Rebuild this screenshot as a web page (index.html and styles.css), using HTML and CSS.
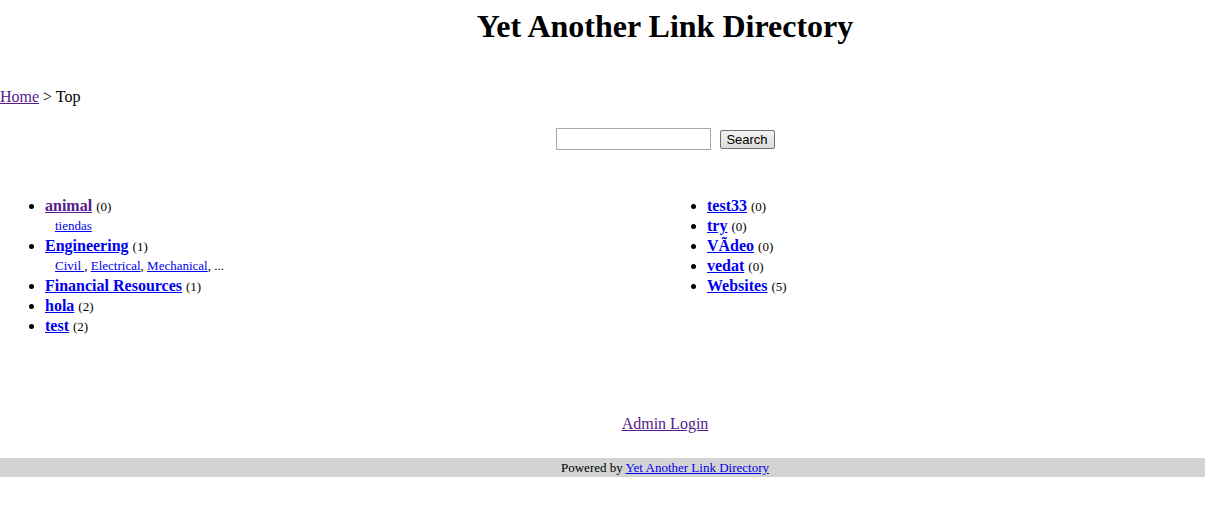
FILE: index.html
```html
<!DOCTYPE html>
<html lang="en">
<head>
    <meta charset="UTF-8">
    <title>Yet Another Link Directory</title>
    <link rel="stylesheet" href="styles.css">
</head>
<body>
    <h1 class="site-title centered">Yet Another Link Directory</h1>

    <div class="breadcrumb">
        <a href="#" class="visited">Home</a> &gt; Top
    </div>

    <form class="search centered">
        <input type="text" class="search-input" name="q">
        <button type="submit" class="search-btn">Search</button>
    </form>

    <div class="categories">
        <ul class="cat-list">
            <li>
                <a href="#" class="cat visited">animal</a> <span class="count">(0)</span>
                <div class="subcats"><a href="#">tiendas</a></div>
            </li>
            <li>
                <a href="#" class="cat">Engineering</a> <span class="count">(1)</span>
                <div class="subcats"><a href="#">Civil </a>, <a href="#">Electrical</a>, <a href="#">Mechanical</a>, ...</div>
            </li>
            <li><a href="#" class="cat">Financial Resources</a> <span class="count">(1)</span></li>
            <li><a href="#" class="cat">hola</a> <span class="count">(2)</span></li>
            <li><a href="#" class="cat">test</a> <span class="count">(2)</span></li>
        </ul>
        <ul class="cat-list">
            <li><a href="#" class="cat">test33</a> <span class="count">(0)</span></li>
            <li><a href="#" class="cat">try</a> <span class="count">(0)</span></li>
            <li><a href="#" class="cat">VÃdeo</a> <span class="count">(0)</span></li>
            <li><a href="#" class="cat">vedat</a> <span class="count">(0)</span></li>
            <li><a href="#" class="cat">Websites</a> <span class="count">(5)</span></li>
        </ul>
    </div>

    <div class="admin centered">
        <a href="#" class="visited">Admin Login</a>
    </div>

    <div class="footer centered">
        Powered by <a href="#">Yet Another Link Directory</a>
    </div>
</body>
</html>
```

FILE: styles.css
```css
html, body {
    margin: 0;
    padding: 0;
    background: white;
}

body {
    font-family: "Liberation Serif", "Times New Roman", serif;
    font-size: 16px;
    color: black;
}

a {
    color: #0000ee;
}

a.visited {
    color: #551a8b;
}

.centered {
    padding-left: 125px;
    text-align: center;
}

.site-title {
    font-size: 32px;
    margin: 8px 0 0 0;
    line-height: 37px;
}

.breadcrumb {
    margin-top: 43px;
    line-height: 18px;
}

.search {
    display: flex;
    justify-content: center;
    align-items: center;
    gap: 9px;
    margin: 22px 0 0 0;
}

.search-input {
    width: 155px;
    height: 22px;
    box-sizing: border-box;
    border: 1px solid #a9a9a9;
    margin: 0;
    padding: 1px 2px;
}

.search-btn {
    font-family: Arial, "Liberation Sans", sans-serif;
    font-size: 13px;
    height: 19px;
    width: 55px;
    padding: 0;
    box-sizing: border-box;
    border: 1px solid #707070;
    border-radius: 2px;
    background: linear-gradient(#f2f2f2, #dcdcdc);
    margin: 0;
}

.categories {
    display: grid;
    grid-template-columns: 662px 1fr;
    margin-top: 46px;
}

.cat-list {
    margin: 0;
    padding-left: 45px;
}

.cat-list li {
    line-height: 20px;
}

.cat {
    font-weight: bold;
}

.count {
    font-size: 13px;
    line-height: 13px;
}

.subcats {
    font-size: 13px;
    line-height: 20px;
    padding-left: 10px;
}

.admin {
    margin-top: 79px;
    line-height: 18px;
}

.footer {
    background: #d3d3d3;
    font-size: 13px;
    line-height: 19px;
    margin-top: 25px;
}
```
